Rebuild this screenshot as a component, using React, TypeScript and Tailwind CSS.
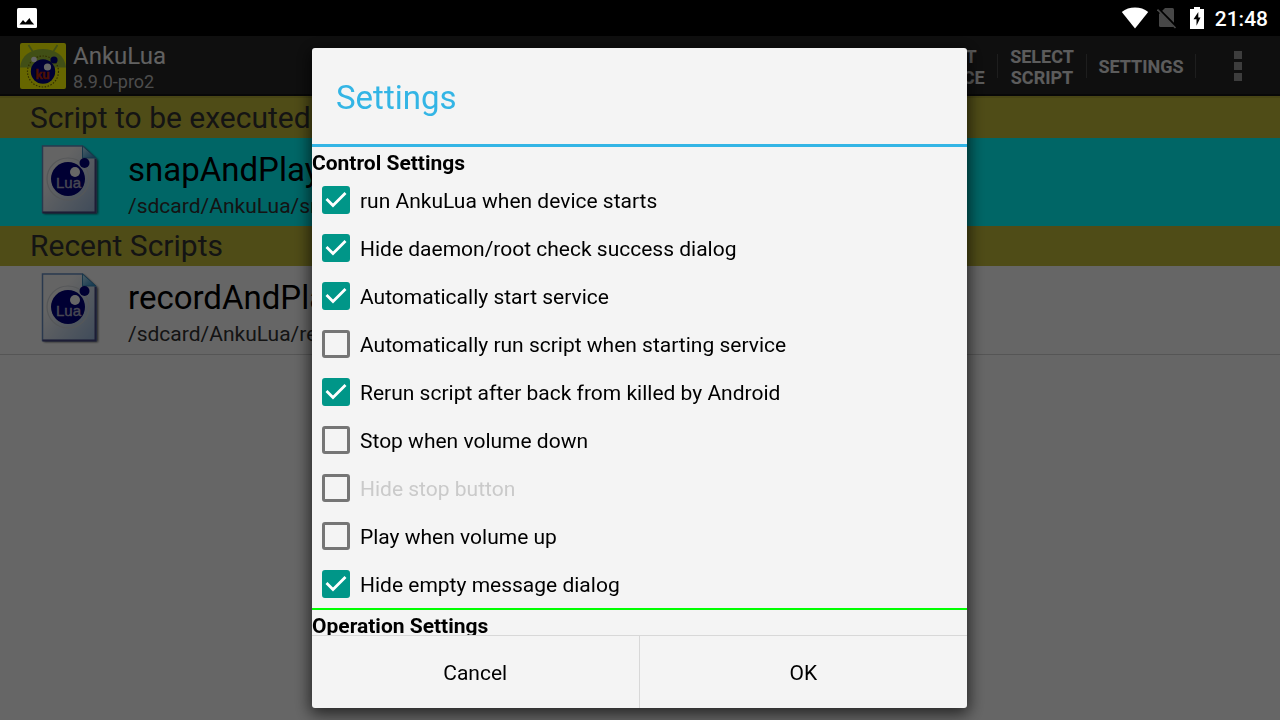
import { useState } from 'react'

interface Option {
  id: string
  label: string
  checked: boolean
  disabled?: boolean
}

const CONTROL_OPTIONS: Option[] = [
  { id: 'run-on-boot', label: 'run AnkuLua when device starts', checked: true },
  { id: 'hide-root-check', label: 'Hide daemon/root check success dialog', checked: true },
  { id: 'auto-start', label: 'Automatically start service', checked: true },
  { id: 'auto-run', label: 'Automatically run script when starting service', checked: false },
  { id: 'rerun', label: 'Rerun script after back from killed by Android', checked: true },
  { id: 'stop-volume', label: 'Stop when volume down', checked: false },
  { id: 'hide-stop', label: 'Hide stop button', checked: false, disabled: true },
  { id: 'play-volume', label: 'Play when volume up', checked: false },
  { id: 'hide-empty', label: 'Hide empty message dialog', checked: true },
]

function StatusBar() {
  return (
    <div className="relative z-20 flex h-9 items-center justify-between bg-black pr-3 pl-[17px] text-white">
      <svg width="20" height="20" viewBox="0 0 20 20" aria-hidden="true">
        <rect width="20" height="20" rx="1.5" fill="#fff" />
        <path d="M2.5 16.500 6 12l2.300 2.500 1-.8L12.500 10l1.500 3 3.200 3.500z" fill="#000" />
      </svg>
      <div className="flex items-center">
        <svg width="28" height="22" viewBox="0 0 28 22" aria-hidden="true">
          <path d="M14 21.500.8 5C4.500 1.800 9 .5 14 .5S23.500 1.800 27.200 5z" fill="#fff" />
        </svg>
        <svg className="ml-2" width="20" height="22" viewBox="0 0 20 22" aria-hidden="true">
          <path d="M8 1h7.500A1.500 1.500 0 0 1 17 2.500v16A1.500 1.500 0 0 1 15.500 20h-12A1.500 1.500 0 0 1 2 18.500V7z" fill="#474747" />
          <path d="M1 1.500 19.500 20" stroke="#000" strokeWidth="2.500" />
          <path d="M.5 2.500 18.500 21" stroke="#474747" strokeWidth="1.600" />
        </svg>
        <svg className="ml-3" width="16" height="22" viewBox="0 0 16 22" aria-hidden="true">
          <path d="M5 0h6v2h4v20H1V2h4z" fill="#fff" />
          <path d="M9.300 5 4.500 12.300h3v6.400L11.500 10.400H9.300z" fill="#000" />
        </svg>
        <span className="ml-2.5 pt-0.5 text-[21px] leading-6 font-medium">21:48</span>
      </div>
    </div>
  )
}

function AppIcon() {
  return (
    <svg width="48" height="48" viewBox="0 0 48 48" aria-hidden="true">
      <rect x="1" y="1" width="46" height="46" rx="2" fill="#ff0" />
      <path d="M1 25.500C2 13.500 12 7 24 7s22 6.500 23 18.500z" fill="#a4c639" />
      <path d="m9.500 3 4.500 7M38.500 3 34 10" stroke="#a4c639" strokeWidth="1.800" />
      <circle cx="24" cy="29.500" r="15.500" fill="none" stroke="#7a7000" strokeWidth="1.200" strokeDasharray="1.500 1.500" />
      <circle cx="24" cy="29.500" r="12.200" fill="#00007f" />
      <circle cx="15" cy="17.500" r="2.800" fill="#fff" />
      <circle cx="35" cy="18" r="3.600" fill="#00007f" />
      <circle cx="28.500" cy="25" r="3.600" fill="#fff" />
      <text x="23.500" y="36.500" textAnchor="middle" fontSize="13" fontWeight="700" fill="#c02a00" stroke="#c02a00" strokeWidth="0.300">
        ku
      </text>
    </svg>
  )
}

function LuaFileIcon({ id }: { id: string }) {
  const fill = `${id}-page`
  const fold = `${id}-fold`
  return (
    <svg className="shrink-0" width="64" height="80" viewBox="0 0 64 80" aria-hidden="true">
      <defs>
        <linearGradient id={fill} x1="0" y1="0" x2="1" y2="1">
          <stop offset="0.300" stopColor="#fafafa" />
          <stop offset="1" stopColor="#9dbbe0" />
        </linearGradient>
        <linearGradient id={fold} x1="0" y1="0" x2="1" y2="1">
          <stop offset="0" stopColor="#c8f0ff" />
          <stop offset="1" stopColor="#1f86c8" />
        </linearGradient>
        <filter id={`${id}-shadow`}>
          <feGaussianBlur stdDeviation="1.200" />
        </filter>
      </defs>
      <path d="M4 5h40l14 13v54H4z" fill="#111" opacity="0.700" filter={`url(#${id}-shadow)`} />
      <path d="M2.500 4h40L56 17v53.500H2.500z" fill={`url(#${fill})`} stroke="#6a90c4" strokeWidth="1.500" />
      <path d="M55.500 17v53.500H2.500" fill="none" stroke="#4a4a86" strokeWidth="2" />
      <path d="M42.500 4 56 16H42.500z" fill={`url(#${fold})`} stroke="#3a8ab8" />
      <circle cx="28" cy="37" r="21" fill="none" stroke="#d4d8dc" strokeWidth="1.200" />
      <circle cx="28" cy="37" r="17" fill="#00007f" />
      <circle cx="35" cy="30" r="5" fill="#fff" />
      <circle cx="44.500" cy="21" r="5" fill="#00007f" />
      <text x="28.500" y="46" textAnchor="middle" fontSize="15" fontFamily="Liberation Sans, sans-serif" fill="#b4b4cc" stroke="#b4b4cc" strokeWidth="0.400">
        Lua
      </text>
    </svg>
  )
}

function ActionBar() {
  return (
    <header className="flex h-15 items-center justify-between border-b-2 border-[#141414] bg-[#262626] pt-0.5 pl-[19px] text-[#f2f2f2]">
      <div className="flex items-center gap-1.5">
        <AppIcon />
        <div className="pt-1">
          <h1 className="text-2xl leading-7">AnkuLua</h1>
          <p className="text-lg leading-6 text-[#bebebe]">8.9.0-pro2</p>
        </div>
      </div>
      <nav className="flex items-center text-lg leading-[21px] font-bold text-[#e6e6e6]">
        <button type="button" className="w-24 px-3 pt-0.5">START SERVICE</button>
        <span className="h-6 w-px bg-[#4c4c4c]" />
        <button type="button" className="w-22 px-3 pt-0.5">SELECT SCRIPT</button>
        <span className="h-6 w-px bg-[#4c4c4c]" />
        <button type="button" className="w-27">SETTINGS</button>
        <span className="h-6 w-px bg-[#4c4c4c]" />
        <button type="button" aria-label="More options" className="flex w-21 flex-col items-center gap-[3px]">
          <span className="size-2 bg-[#999]" />
          <span className="size-2 bg-[#999]" />
          <span className="size-2 bg-[#999]" />
        </button>
      </nav>
    </header>
  )
}

interface ScriptRowProps {
  id: string
  name: string
  path: string
  active?: boolean
}

function ScriptRow({ id, name, path, active }: ScriptRowProps) {
  return (
    <div className={active ? 'flex h-22 items-center gap-6 bg-[#00ffff] pl-10' : 'flex h-22 items-center gap-6 pl-10'}>
      <LuaFileIcon id={id} />
      <div className="pt-[7px]">
        <p className="text-[33px] leading-10 text-black">{name}</p>
        <p className="text-[21px] leading-8 text-[#323232]">{path}</p>
      </div>
    </div>
  )
}

function SettingRow({ option, onToggle }: { option: Option; onToggle: () => void }) {
  return (
    <label
      htmlFor={option.id}
      className={
        option.disabled
          ? 'flex h-12 items-center gap-2.5 pl-2.5 text-[21px] text-[#cacaca]'
          : 'flex h-12 items-center gap-2.5 pl-2.5 text-[21px] text-black'
      }
    >
      <span className="relative size-7">
        <input
          id={option.id}
          type="checkbox"
          checked={option.checked}
          disabled={option.disabled}
          onChange={onToggle}
          className="peer block size-7 appearance-none rounded-[3px] border-3 border-[#757575] checked:border-[#009688] checked:bg-[#009688]"
        />
        <svg
          className="pointer-events-none absolute inset-0 hidden peer-checked:block"
          width="28"
          height="28"
          viewBox="0 0 28 28"
          aria-hidden="true"
        >
          <path d="m4.500 13 6.500 6.500L23.500 7" fill="none" stroke="#fff" strokeWidth="2.800" />
        </svg>
      </span>
      <span className="pt-1">{option.label}</span>
    </label>
  )
}

function SettingsDialog() {
  const [options, setOptions] = useState(CONTROL_OPTIONS)

  const toggle = (id: string) => {
    setOptions((prev) => prev.map((o) => (o.id === id ? { ...o, checked: !o.checked } : o)))
  }

  return (
    <div className="fixed inset-0 z-10 flex justify-center bg-black/60 pt-12 pr-px pb-3">
      <div
        role="dialog"
        aria-labelledby="settings-title"
        className="flex w-[655px] flex-col overflow-hidden rounded-[3px] bg-[#f4f4f4] text-black shadow-[0_4px_16px_2px_rgba(0,0,0,0.65)]"
      >
        <h2
          id="settings-title"
          className="flex h-[99px] shrink-0 items-center border-b-3 border-[#33b5e5] px-6 pt-1 text-[33px] text-[#33b5e5]"
        >
          Settings
        </h2>
        <div className="min-h-0 flex-1 overflow-y-auto [scrollbar-width:none]">
          <section className="border-b-2 border-[#00ff00]">
            <h3 className="h-[29px] text-[21px] leading-8 font-bold">Control Settings</h3>
            {options.map((option) => (
              <SettingRow key={option.id} option={option} onToggle={() => toggle(option.id)} />
            ))}
          </section>
          <h3 className="h-[29px] text-[21px] leading-8 font-bold">Operation Settings</h3>
        </div>
        <div className="grid h-[73px] shrink-0 grid-cols-2 border-t border-[#d8d8d8] text-[21px]">
          <button type="button" className="border-r border-[#d8d8d8] pt-1">Cancel</button>
          <button type="button" className="pt-1">OK</button>
        </div>
      </div>
    </div>
  )
}

export default function App() {
  return (
    <div className="min-h-screen bg-white font-['Roboto',sans-serif]">
      <StatusBar />
      <ActionBar />
      <main>
        <h2 className="border-t-2 border-[#b4ad35] bg-[#c6be3a] pl-[30px] text-3xl leading-10 text-[#333]">
          Script to be executed
        </h2>
        <ScriptRow id="snap" name="snapAndPlay" path="/sdcard/AnkuLua/snap" active />
        <h2 className="bg-[#c6be3a] pl-[30px] text-3xl leading-10 text-[#333]">Recent Scripts</h2>
        <div className="border-b border-[#d4d4d4]">
          <ScriptRow id="record" name="recordAndPlay" path="/sdcard/AnkuLua/record" />
        </div>
      </main>
      <SettingsDialog />
    </div>
  )
}
